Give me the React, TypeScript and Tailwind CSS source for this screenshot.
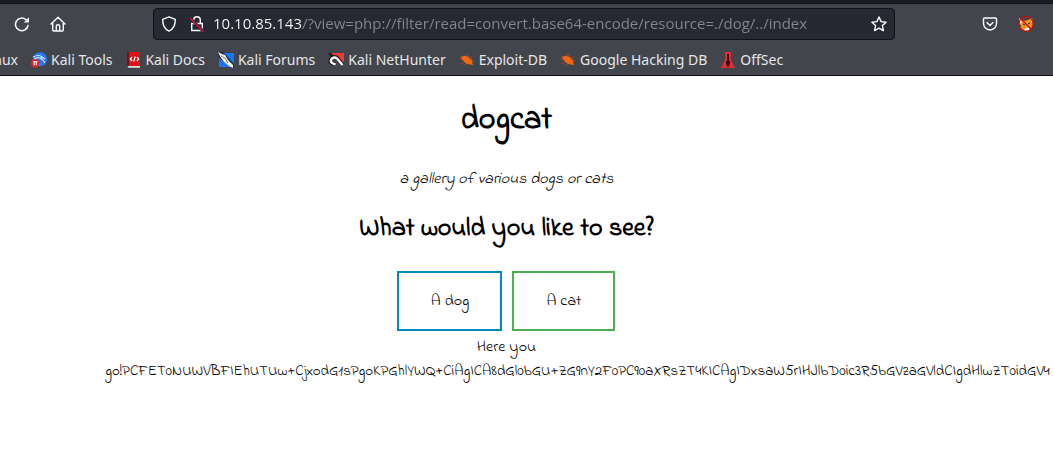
import type { ReactNode } from "react";

const encoded =
  "go!PCFET0NUWVBFIEhUTUw+CjxodG1sPgoKPGhlYWQ+CiAgICA8dGl0bGU+ZG9nY2F0PC90aXRsZT4KICAgIDxsaW5rIHJlbD0ic3R5bGVzaGVldCIgdHlwZT0idGV4";

function ToolsIcon() {
  return (
    <svg viewBox="0 0 16 16" className="size-4 shrink-0" aria-hidden="true">
      <circle cx="9" cy="7.2" r="7" fill="#2777ff" />
      <path d="M2 5C6 3 9 3 11 5l3 2M3 7c4-2 7-2 9 1l2 3M11 5c-2 1-1 3 1 3" fill="none" stroke="#d5e5ff" strokeWidth="1.1" />
      <circle cx="4.2" cy="11.3" r="4.2" fill="#e9262d" />
      <path d="M2 9.7h4.5M3.2 9.7v3.5M5.2 9.7v3.5" stroke="#fff" strokeWidth="1" />
    </svg>
  );
}

function DocsIcon() {
  return (
    <svg viewBox="0 0 16 16" className="size-4 shrink-0" aria-hidden="true">
      <path d="M2 0h2v14H2z" fill="#741017" />
      <path d="M4 0h11v14H4z" fill="#d91519" />
      <path d="M2.5 14H15v1.7H3.5z" fill="#dedede" />
      <path d="M7 5 5.3 7 7 9M12 5l1.7 2L12 9M10.3 4.5l-1.6 5" fill="none" stroke="#fff" strokeWidth="1.2" />
    </svg>
  );
}

function ForumsIcon() {
  return (
    <svg viewBox="0 0 16 16" className="size-4 shrink-0" aria-hidden="true">
      <path d="M1 1h15v14H1z" fill="#1976f3" />
      <path d="M0 0h5l11 12v4l-5-2L1 6z" fill="#202a3b" />
      <path d="m0 0 4 2 3 1 3 5 5 5v3l-4-2-5-4-3-4z" fill="#f4f7fb" />
      <path d="m3 4 4 2 3 5" fill="none" stroke="#6e7b8c" />
    </svg>
  );
}

function HunterIcon() {
  return (
    <svg viewBox="0 0 16 16" className="size-4 shrink-0" aria-hidden="true">
      <path d="M0 1h16v13z" fill="#f03a3a" />
      <path d="M0 1h3l3 3-3 1z" fill="#231a20" />
      <path d="M7 12.500 3.500 11C0 7.500 6 3 9.500 6.500L15 13" fill="none" stroke="#231a20" strokeWidth="4" />
      <path d="M7.500 12.500 4 11C.5 8 6 3.500 9.500 7l5 6" fill="none" stroke="#fff" strokeWidth="2.400" />
    </svg>
  );
}

function BugIcon() {
  return (
    <svg viewBox="0 0 16 16" className="size-4 shrink-0" aria-hidden="true">
      <path d="m1 4 5 3 1-5M0 7l7 1M1 12l7-3M4 14l5-3M8 2l3 4M12 4l1 4M15 8l-2 3" stroke="#9d4b24" strokeWidth=".8" fill="none" />
      <path d="M2 5.500c2-2 6-2 8.500.5l3 3-.5 2 1.500 2-3.500-.5-4-1-3-3z" fill="#f26716" />
    </svg>
  );
}

function OffSecIcon() {
  return (
    <svg viewBox="0 0 16 16" className="size-4 shrink-0" aria-hidden="true">
      <path d="M5 0h6v8l4 8H1l4-8z" fill="#e92830" />
      <path d="M7 2h2v7h1v4H6V9h1z" fill="#310d16" />
      <path d="M8 11v4" stroke="#310d16" strokeWidth="1.5" />
    </svg>
  );
}

function Bookmark({ icon, children }: { icon: ReactNode; children: ReactNode }) {
  return (
    <a href="#" className="flex shrink-0 items-center gap-1 whitespace-nowrap">
      {icon}
      <span>{children}</span>
    </a>
  );
}

const line = "size-4 fill-none stroke-[#fbfbfe]";

export default function App() {
  return (
    <div className="overflow-hidden bg-white text-black">
      <header className="border-b border-[#0c0c12] bg-[#42454c] font-['Noto_Sans',sans-serif] text-sm text-[#e6e6e9]">
        <div className="h-1 border-b border-[#111217] bg-[#1b1c23]" />
        <div className="flex h-10 items-center">
          <div className="flex w-[153px] shrink-0 items-center gap-5 pl-[14px]">
            <button type="button" aria-label="Reload">
              <svg viewBox="0 0 16 16" className={line} strokeWidth="1.5" strokeLinecap="round">
                <path d="M14 9.500A6.300 6.300 0 1 1 12 3.700l1 1" />
                <path d="M15 1.300v5.200H9.800z" fill="#fbfbfe" stroke="none" />
              </svg>
            </button>
            <button type="button" aria-label="Home">
              <svg viewBox="0 0 16 16" className={line} strokeWidth="1.4" strokeLinecap="round" strokeLinejoin="round">
                <path d="m1 8 7-6.8L15 8M2.7 7v7q0 1 1 1h8.6q1 0 1-1V7" />
                <path d="M6.3 14.5V10q0-1.3 1.7-1.3T9.7 10v4.5" />
              </svg>
            </button>
          </div>
          <div className="flex h-8 min-w-0 flex-1 items-center rounded border border-[#111218] bg-[#272932] px-[7px]">
            <svg viewBox="0 0 16 16" className="size-4 shrink-0 fill-none stroke-[#fbfbfe]" strokeWidth="1.4" strokeLinejoin="round" aria-hidden="true">
              <path d="m8 .9 6.3 2.5C14.4 9 12 13.2 8 15.1 4 13.2 1.600 9 1.700 3.400z" />
            </svg>
            <svg viewBox="0 0 16 16" className="ml-3 size-4 shrink-0 fill-none stroke-[#fbfbfe]" strokeWidth="1.4" aria-hidden="true">
              <path d="M4.700 7V4a3.300 3.300 0 0 1 6.600 0v3M2.700 7.500h10.600v7H2.700z" />
              <path d="m1 2 13 13" stroke="#272932" strokeWidth="3" />
              <path d="m1 2 13.500 13.500" stroke="#e40b48" />
            </svg>
            <input
              aria-label="Address"
              className="ml-2 min-w-0 flex-1 bg-[linear-gradient(90deg,#fbfbfe_88px,#85868f_88px)] bg-clip-text font-['Open_Sans',sans-serif] text-[15px] text-transparent outline-none"
              defaultValue="10.10.85.143/?view=php://filter/read=convert.base64-encode/resource=./dog/../index"
            />
            <button type="button" aria-label="Bookmark this page">
              <svg viewBox="0 0 16 16" className={line} strokeWidth="1.4" strokeLinejoin="round">
                <path d="m8 1 2.100 4.600 5 .6-3.700 3.400 1 5L8 12.100l-4.400 2.500 1-5L.9 6.200l5-.6z" />
              </svg>
            </button>
          </div>
          <div className="flex w-[158px] shrink-0 items-center justify-end gap-5 pr-[19px]">
            <button type="button" aria-label="Save to Pocket">
              <svg viewBox="0 0 16 16" className={line} strokeWidth="1.400" strokeLinecap="round" strokeLinejoin="round">
                <path d="M2.500 2h11q1 0 1 1v4.500a6.500 6.500 0 0 1-13 0V3q0-1 1-1zM5 6.500l3 3 3-3" />
              </svg>
            </button>
            <button type="button" aria-label="FoxyProxy disabled">
              <svg viewBox="0 0 16 16" className="size-4">
                <path d="m2 3 4 2 4-1 4-2 1 7-3 5-5 1-4-3z" fill="#ee961f" />
                <path d="M1 2 4 5 2 9zM13 2l2 3-1 3zM6 13l6-2-2 4H7z" fill="#f8eee0" />
                <path d="m5 8 2 1M10 8l2-1" stroke="#432318" />
                <circle cx="8" cy="8" r="7.200" fill="none" stroke="#d30c0c" strokeWidth="1.200" />
                <path d="m3 3 10 10" stroke="#d30c0c" strokeWidth="1.200" />
              </svg>
            </button>
          </div>
        </div>
        <nav aria-label="Bookmarks" className="flex h-[31px] items-center gap-[13px] overflow-hidden">
          <a href="#" className="flex w-[18px] shrink-0 justify-end whitespace-nowrap">nux</a>
          <Bookmark icon={<ToolsIcon />}>Kali Tools</Bookmark>
          <Bookmark icon={<DocsIcon />}>Kali Docs</Bookmark>
          <Bookmark icon={<ForumsIcon />}>Kali Forums</Bookmark>
          <Bookmark icon={<HunterIcon />}>Kali NetHunter</Bookmark>
          <Bookmark icon={<BugIcon />}>Exploit-DB</Bookmark>
          <Bookmark icon={<BugIcon />}>Google Hacking DB</Bookmark>
          <Bookmark icon={<OffSecIcon />}>OffSec</Bookmark>
        </nav>
      </header>
      <div className="pr-10">
        <main className="mx-auto w-4/5 pt-[22px] pb-20 text-center font-['Indie_Flower',Lato,sans-serif] text-base leading-6">
          <h1 className="text-[32px] leading-[46px] font-bold">dogcat</h1>
          <p className="mt-[23px] italic">a gallery of various dogs or cats</p>
          <h2 className="mt-5 text-[26px] leading-9 font-bold">What would you like to see?</h2>
          <div className="mt-6 flex justify-center gap-[10px]">
            <a href="#" className="flex h-[60px] w-[105px] items-center justify-center border-2 border-[#008cba]">A dog</a>
            <a href="#" className="flex h-[60px] w-[103px] items-center justify-center border-2 border-[#4caf50]">A cat</a>
          </div>
          <p className="mt-1">Here you</p>
          <p className="px-1 text-left text-[15px] whitespace-nowrap">{encoded}</p>
        </main>
      </div>
    </div>
  );
}
